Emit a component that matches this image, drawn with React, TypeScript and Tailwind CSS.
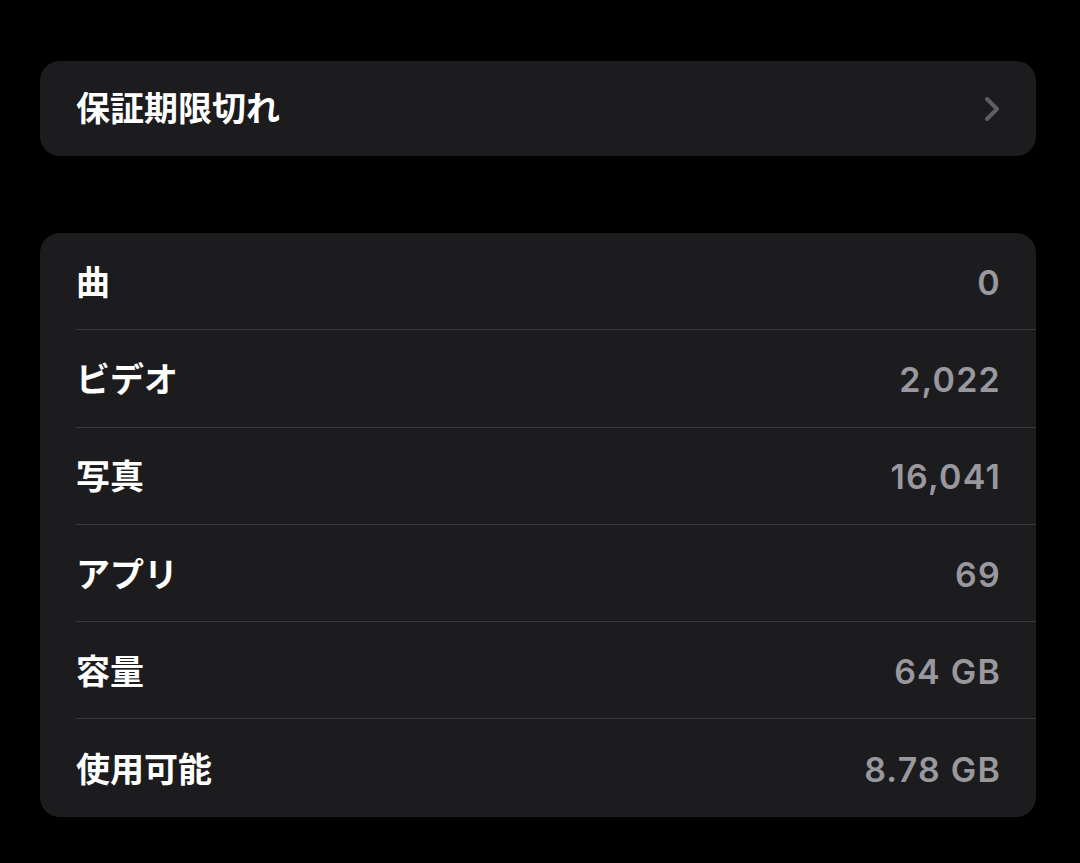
const rows = [
  { label: "曲", value: "0" },
  { label: "ビデオ", value: "2,022" },
  { label: "写真", value: "16,041" },
  { label: "アプリ", value: "69" },
  { label: "容量", value: "64 GB" },
  { label: "使用可能", value: "8.78 GB" },
];

function Chevron() {
  return (
    <svg width="18" height="26" viewBox="0 0 18 26" fill="none">
      <path d="M4 3 L14 13 L4 23" stroke="#5e5e62" strokeWidth="4" strokeLinecap="round" strokeLinejoin="round" />
    </svg>
  );
}

export default function App() {
  return (
    <div
      className="min-h-[863px] w-full bg-black px-10 pt-[61px]"
      style={{ fontFamily: '"Inter", "Noto Sans CJK JP", sans-serif' }}
    >
      <div className="flex h-[95px] w-[996px] items-center justify-between rounded-[20px] bg-[#1c1c1e] pl-9 pr-[35px]">
        <span className="text-[34px] font-semibold leading-none text-white">保証期限切れ</span>
        <Chevron />
      </div>

      <div className="mt-[77px] w-[996px] overflow-hidden rounded-[20px] bg-[#1c1c1e] pl-9">
        {rows.map((r, i) => (
          <div
            key={r.label}
            className={
              "flex h-[97.3px] items-center justify-between pr-[35px] pt-[3px] " +
              (i < rows.length - 1 ? "border-b border-[#38383a]" : "")
            }
          >
            <span className="text-[34px] font-semibold leading-none text-white">{r.label}</span>
            <span className="text-[34px] font-semibold leading-none tracking-[1.2px] text-[#98989e]">{r.value}</span>
          </div>
        ))}
      </div>
    </div>
  );
}
